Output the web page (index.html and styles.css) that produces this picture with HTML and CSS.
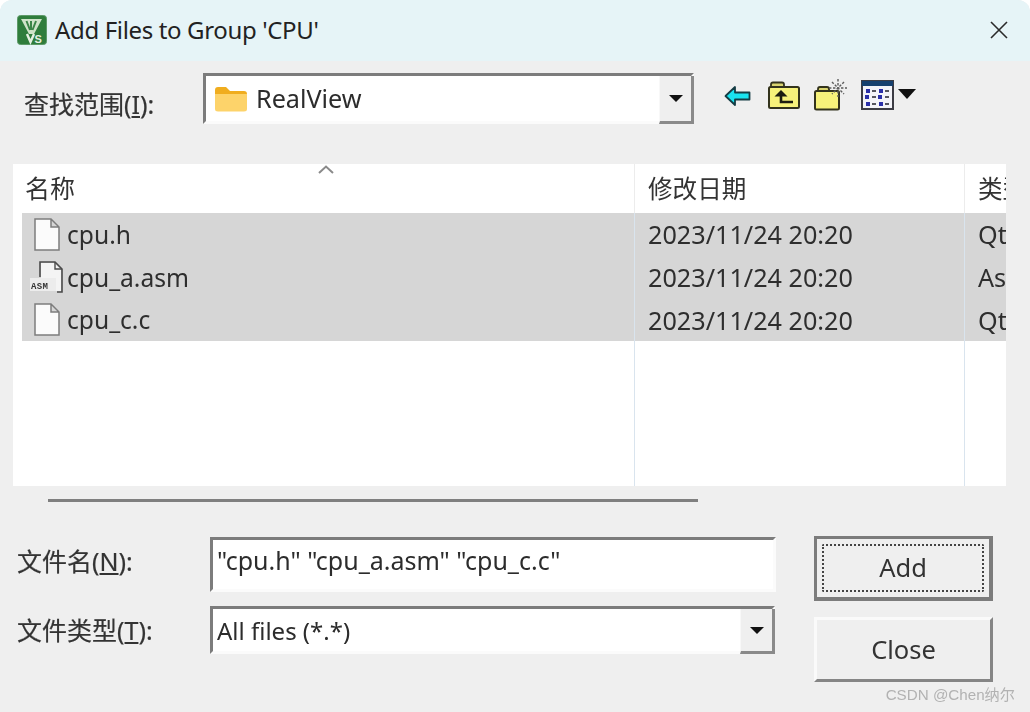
FILE: index.html
```html
<!DOCTYPE html>
<html lang="zh">
<head>
<meta charset="utf-8">
<title>Add Files to Group 'CPU'</title>
<link rel="stylesheet" href="styles.css">
</head>
<body>
<div class="window">
  <header class="titlebar">
    <svg class="logo" viewBox="0 0 30 30" aria-hidden="true">
      <rect x="0.5" y="0.5" width="29" height="29" rx="3" fill="#2f7d3c" stroke="#5d9a68"/>
      <path d="M4 4H25L17 19H12Z" fill="#cfe3c9"/>
      <path d="M9.5 6L13 15M14 6V15M19 6L15.5 15" stroke="#3b8547" stroke-width="2" fill="none"/>
      <path d="M10 19L13.5 27L17 19" stroke="#e6f0e2" stroke-width="2.4" fill="none"/>
      <text x="17.5" y="28" class="logo-s">S</text>
    </svg>
    <h1 class="title">Add Files to Group 'CPU'</h1>
    <svg class="close-x" viewBox="0 0 18 18" aria-hidden="true">
      <path d="M1 1L17 17M17 1L1 17" stroke="#2a2a2a" stroke-width="1.6" fill="none"/>
    </svg>
  </header>

  <section class="look-row">
    <label class="label look-label">查找范围(<u>I</u>):</label>
    <div class="combo look-combo">
      <svg class="folder" viewBox="0 0 34 26" aria-hidden="true">
        <path d="M1 4Q1 1 4 1H12L16 5H30Q33 5 33 8V9H1Z" fill="#f0ad1f"/>
        <path d="M1 8H33V23Q33 25.5 30 25.5H4Q1 25.5 1 23Z" fill="#fdd36a"/>
      </svg>
      <span class="combo-text">RealView</span>
      <span class="combo-btn"><i class="tri"></i></span>
    </div>
    <div class="tools">
      <svg class="tool tool-back" viewBox="0 0 27 22" aria-hidden="true">
        <path d="M1.5 11L11 2V7.5H25.5V14.5H11V20Z" fill="#19e3ef" stroke="#143c44" stroke-width="1.8" stroke-linejoin="round"/>
      </svg>
      <svg class="tool tool-up" viewBox="0 0 32 28" aria-hidden="true">
        <path d="M3 6V3.5Q3 1.5 5 1.5H14Q16 1.5 16 3.5V6" fill="#d9d470" stroke="#33331c" stroke-width="1.8"/>
        <rect x="1" y="6" width="30" height="21" rx="1.5" fill="#f7f27a" stroke="#33331c" stroke-width="2"/>
        <path d="M13 9L6.5 15.5H19.5Z" fill="#1d1d10"/>
        <path d="M13 14V21H25" fill="none" stroke="#1d1d10" stroke-width="2.6"/>
      </svg>
      <svg class="tool tool-new" viewBox="0 0 34 33" aria-hidden="true">
        <path d="M4 13V11Q4 9 6 9H13Q15 9 15 11V13" fill="#d9d470" stroke="#33331c" stroke-width="1.8"/>
        <rect x="1" y="13" width="24" height="18.5" rx="1.5" fill="#f7f27a" stroke="#33331c" stroke-width="2"/>
        <path d="M24 1V19M15 10H33M18 4L30 16M30 4L18 16" stroke="#5c5c5c" stroke-width="1.4" stroke-dasharray="2.4 1.6"/>
      </svg>
      <div class="view-tool">
        <svg class="tool tool-view" viewBox="0 0 33 30" aria-hidden="true">
          <rect x="1" y="1" width="31" height="28" fill="#f3f3f8" stroke="#3c3c44" stroke-width="2"/>
          <rect x="1" y="1" width="31" height="5" fill="#16406e"/>
          <g fill="#2a2fa8">
            <rect x="5" y="9" width="4" height="4"/><rect x="18" y="9" width="4" height="4"/>
            <rect x="4" y="15" width="4" height="4"/><rect x="17" y="15" width="4" height="4"/>
            <rect x="5" y="22" width="4" height="4"/><rect x="18" y="22" width="4" height="4"/>
          </g>
          <g fill="#55555f">
            <rect x="11" y="10" width="4" height="2"/><rect x="24" y="10" width="4" height="2"/>
            <rect x="11" y="16" width="4" height="2"/><rect x="24" y="16" width="4" height="2"/>
            <rect x="11" y="23" width="4" height="2"/><rect x="24" y="23" width="4" height="2"/>
          </g>
        </svg>
        <i class="tri tri-lg"></i>
      </div>
    </div>
  </section>

  <section class="list">
    <div class="list-head">
      <div class="head-cell head-name">名称
        <svg class="sort" viewBox="0 0 16 9" aria-hidden="true"><path d="M1 8L8 1.5L15 8" fill="none" stroke="#8a8a8a" stroke-width="2"/></svg>
      </div>
      <div class="head-cell">修改日期</div>
      <div class="head-cell">类型</div>
    </div>
    <div class="rows">
      <div class="row">
        <div class="cell cell-name">
          <svg class="file" viewBox="0 0 26 33" aria-hidden="true"><path d="M1 1H17L25 9V32H1Z M17 1V9H25" fill="#fbfbfb" stroke="#7d7d7d" stroke-width="1.5"/></svg>
          <span>cpu.h</span>
        </div>
        <div class="cell">2023/11/24 20:20</div>
        <div class="cell">Qt</div>
      </div>
      <div class="row">
        <div class="cell cell-name">
          <svg class="file file-asm" viewBox="0 0 34 33" aria-hidden="true">
            <path d="M10 16V1H25L32 8V31H27" fill="none" stroke="#4a4a4a" stroke-width="1.6"/>
            <path d="M11 2H24L31 9V30H11Z" fill="#f4f4f4"/>
            <path d="M25 1V8H32" fill="none" stroke="#4a4a4a" stroke-width="1.4"/>
            <rect x="0" y="17" width="26" height="13" fill="#ececec"/>
            <text x="1" y="28" class="asm-text">ASM</text>
          </svg>
          <span>cpu_a.asm</span>
        </div>
        <div class="cell">2023/11/24 20:20</div>
        <div class="cell">As</div>
      </div>
      <div class="row">
        <div class="cell cell-name">
          <svg class="file" viewBox="0 0 26 33" aria-hidden="true"><path d="M1 1H17L25 9V32H1Z M17 1V9H25" fill="#fbfbfb" stroke="#7d7d7d" stroke-width="1.5"/></svg>
          <span>cpu_c.c</span>
        </div>
        <div class="cell">2023/11/24 20:20</div>
        <div class="cell">Qt</div>
      </div>
      <div class="row row-empty">
        <div class="cell cell-name"></div><div class="cell"></div><div class="cell"></div>
      </div>
    </div>
  </section>

  <div class="hscroll"></div>

  <section class="form">
    <div class="fields">
      <div class="field field-name">
        <label class="label">文件名(<u>N</u>):</label>
        <div class="input">"cpu.h" "cpu_a.asm" "cpu_c.c"</div>
      </div>
      <div class="field field-type">
        <label class="label">文件类型(<u>T</u>):</label>
        <div class="combo type-combo">
          <span class="combo-text">All files (*.*)</span>
          <span class="combo-btn"><i class="tri"></i></span>
        </div>
      </div>
    </div>
    <div class="actions">
      <button class="btn btn-default"><span class="focus">Add</span></button>
      <button class="btn">Close</button>
    </div>
  </section>

  <div class="watermark">CSDN @Chen纳尔</div>
</div>
</body>
</html>
```
FILE: styles.css
```css
* { box-sizing: border-box; }
html, body { margin: 0; padding: 0; background: #fff; overflow: hidden; }
body {
  font-family: "Noto Sans", "Noto Sans CJK SC", sans-serif;
  font-size: 25px;
  color: #2c2c2c;
}
.window {
  position: relative;
  width: 1030px;
  height: 712px;
  background: #efefef;
  border-radius: 12px 12px 0 0;
  overflow: hidden;
  display: flex;
  flex-direction: column;
  filter: blur(0.55px);
}
.titlebar {
  height: 61px;
  flex: none;
  background: #e6f4f7;
  display: flex;
  align-items: center;
  padding: 0 22px 2px 17px;
}
.logo { width: 30px; height: 30px; flex: none; }
.logo-s { font: bold 11px "Liberation Sans", sans-serif; fill: #e6f0e2; }
.title {
  margin: 0 0 0 8px;
  font-size: 24px;
  font-weight: 400;
  color: #222;
  letter-spacing: -0.35px;
  flex: 1;
}
.close-x { width: 18px; height: 18px; flex: none; }

.look-row {
  height: 103px;
  flex: none;
  display: flex;
  align-items: flex-start;
  padding: 12px 0 0 24px;
}
.label { white-space: nowrap; font-size: 25px; color: #333; -webkit-text-stroke: 0.2px #333; }
.look-label { width: 179px; margin-top: 12px; }
.combo {
  display: flex;
  align-items: center;
  background: #fff;
  border: 3px solid #7c7c7c;
  border-right-color: #fbfbfb;
  border-bottom-color: #fbfbfb;
  position: relative;
}
.look-combo { width: 491px; height: 51px; padding-left: 8px; }
.folder { width: 34px; height: 26px; flex: none; margin-right: 8px; }
.combo-text { flex: 1; line-height: 1; }
.look-combo .combo-text { font-size: 25.2px; }
.type-combo .combo-text { font-size: 24px; position: relative; top: 1px; }
.combo-btn {
  align-self: stretch;
  width: 35px;
  flex: none;
  background: #efefef;
  border-right: 3px solid #8a8a8a;
  border-bottom: 3px solid #8a8a8a;
  border-left: 1px solid #f8f8f8;
  margin: 0 -3px -3px 0;
  display: flex;
  align-items: center;
  justify-content: center;
}
.tri {
  display: block;
  width: 0;
  height: 0;
  border-left: 7px solid transparent;
  border-right: 7px solid transparent;
  border-top: 7px solid #111;
}
.tri-lg { border-left-width: 9.5px; border-right-width: 9.5px; border-top-width: 10px; margin: 9px 0 0 4px; }

.tools { display: flex; align-items: flex-start; margin: 12px 0 0 30px; }
.tool { flex: none; display: block; }
.tool-back { width: 27px; height: 22px; }
.tool-up { width: 32px; height: 28px; margin: -4px 0 0 17px; }
.tool-new { width: 34px; height: 33px; margin: -7px 0 0 14px; }
.view-tool { display: flex; align-items: flex-start; margin: -5px 0 0 13px; }
.tool-view { width: 33px; height: 30px; }

.list {
  flex: none;
  width: 993px;
  height: 322px;
  margin-left: 13px;
  background: #fff;
  display: flex;
  flex-direction: column;
}
.list-head {
  height: 49px;
  flex: none;
  display: grid;
  grid-template-columns: 621px 330px 42px;
  overflow: hidden;
}
.head-cell {
  position: relative;
  padding: 5px 0 0 13px;
  white-space: nowrap;
  font-size: 24.6px;
  color: #333;
  border-left: 1px solid #ececec;
  overflow: hidden;
}
.head-name { border-left: 0; padding-left: 12px; font-size: 25px; }
.sort { position: absolute; left: 305px; top: 1px; width: 16px; height: 9px; }

.rows { flex: 1; display: flex; flex-direction: column; }
.row {
  height: 42.7px;
  flex: none;
  margin-left: 9px;
  background: #d6d6d6;
  display: grid;
  grid-template-columns: 612px 330px 42px;
  overflow: hidden;
}
.row-empty { flex: 1; height: auto; background: #fff; }
.cell {
  display: flex;
  align-items: center;
  padding-left: 13px;
  white-space: nowrap;
  overflow: hidden;
  border-left: 1px solid #d9e4ee;
  color: #2e2e2e;
  font-size: 25.2px;
}
.cell-name { border-left: 0; padding-left: 12px; font-size: 24.6px; }
.file { width: 26px; height: 33px; flex: none; margin-right: 7px; }
.file-asm { width: 34px; margin: 0 3px 0 -4px; }
.asm-text { font: bold 9px "Liberation Mono", monospace; fill: #333; letter-spacing: 0.4px; }

.hscroll {
  flex: none;
  width: 650px;
  height: 3px;
  margin: 13px 0 0 48px;
  background: #7f7f7f;
}

.form {
  flex: 1;
  display: flex;
  align-items: flex-start;
  padding: 34px 0 0 17px;
}
.fields { width: 759px; flex: none; margin: 1px 38px 0 0; }
.field { display: flex; align-items: center; }
.field .label { width: 193px; flex: none; }
.field-name .label { padding-bottom: 9px; }
.field-type .label { padding-bottom: 2px; }
.input {
  width: 566px;
  height: 55px;
  background: #fff;
  border: 3px solid #7c7c7c;
  border-right-color: #fbfbfb;
  border-bottom-color: #fbfbfb;
  padding: 4px 0 0 4px;
  line-height: 32px;
  white-space: nowrap;
}
.field-type { margin-top: 14px; }
.type-combo { width: 565px; height: 48px; padding-left: 4px; }
.actions { width: 179px; flex: none; display: flex; flex-direction: column; gap: 16px; }
.btn {
  width: 179px;
  height: 65px;
  padding: 0 0 2px;
  font: inherit;
  font-size: 25.5px;
  color: #333;
  background: #efefef;
  border: 3px solid;
  border-color: #fafafa #858585 #858585 #fafafa;
  display: flex;
  align-items: center;
  justify-content: center;
}
.btn-default {
  border: 3px solid #7c7c7c;
  border-right-width: 4px;
  border-bottom-width: 4px;
  padding: 5px;
}
.focus {
  width: 100%;
  height: 100%;
  border: 2px dotted #444;
  border-radius: 2px;
  padding-bottom: 2px;
  display: flex;
  align-items: center;
  justify-content: center;
}
.watermark {
  position: absolute;
  right: 15px;
  bottom: 8px;
  font-family: "Liberation Sans", "Noto Sans CJK SC", sans-serif;
  font-size: 15.2px;
  color: #b2b2b2;
  white-space: nowrap;
}
```
